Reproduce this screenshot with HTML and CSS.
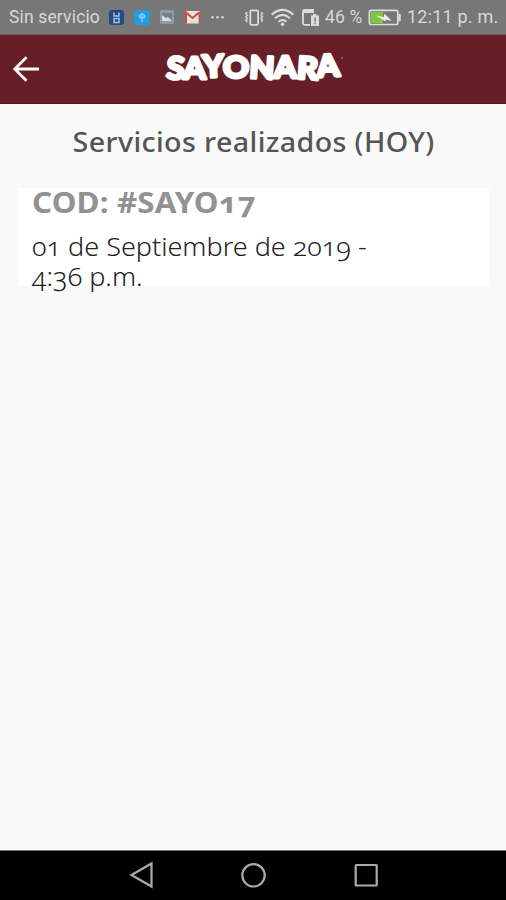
FILE: index.html
```html
<!DOCTYPE html>
<html lang="es">
<head>
  <meta charset="UTF-8" />
  <meta name="viewport" content="width=device-width, initial-scale=1.0">
  <title>Sayonara - Servicios realizados</title>
  <link rel="stylesheet" href="styles.css">
</head>
<body>
  <div class="statusbar">
    <span class="carrier">Sin servicio</span>
    <svg class="notifications" width="118" height="34" viewBox="108 0 118 34">
      <rect x="109" y="10" width="15" height="15" rx="3" fill="#234a87"/>
      <path d="M114 12.500v3.500h5v-3.500M114 22.500v-4h5v4z" fill="none" stroke="#a9bfdf" stroke-width="1.500"/>
      <rect x="134" y="10" width="16" height="15" rx="3" fill="#229cdb"/>
      <path d="M142 13v9M139.500 15.500l2.500-2 2.500 2v2h-5z" fill="none" stroke="#8ed0f0" stroke-width="1.300"/>
      <rect x="160" y="10" width="14" height="14" rx="1.500" fill="#8d9ba4"/>
      <path d="M162 13h10v8h-10z" fill="#71818c"/>
      <path d="M162 21v-6l4 3 2-1 4 4z" fill="#d5dcdf"/>
      <rect x="185" y="11" width="15" height="12.500" rx="1" fill="#e4e1df"/>
      <path d="M186 23.500V12.500l6.500 5.500 6.500-5.500" fill="none" stroke="#d6493f" stroke-width="2"/>
      <path d="M199.300 12v11.500" stroke="#d6493f" stroke-width="1.400"/>
      <g fill="#d4d4d4">
        <circle cx="212.500" cy="17.300" r="1.300"/>
        <circle cx="217.500" cy="17.300" r="1.300"/>
        <circle cx="222.500" cy="17.300" r="1.300"/>
      </g>
    </svg>
    <svg class="signals" width="80" height="34" viewBox="242 0 80 34">
      <rect x="250.300" y="10.300" width="7.800" height="14.500" rx="1.200" fill="none" stroke="#dcdcdc" stroke-width="1.800"/>
      <path d="M247.200 12l-1.200 1.500 1.200 1.700-1.200 1.700 1.200 1.700-1.200 1.700 1.200 1.700M261.200 12l1.200 1.500-1.200 1.700 1.200 1.700-1.200 1.700 1.200 1.700-1.200 1.700" fill="none" stroke="#d0d0d0" stroke-width="1.800"/>
      <g fill="none" stroke="#dcdcdc" stroke-width="2">
        <path d="M271.700 14.700q11-9.600 21.600 0"/>
        <path d="M275 18.300q7.500-6.800 15 0"/>
        <path d="M278.500 21.800q4-3.600 8 0"/>
      </g>
      <circle cx="282.500" cy="24.300" r="1.800" fill="#dcdcdc"/>
      <path d="M310 24.800h-5.500q-1.500 0-1.500-1.500v-11.800q0-1.500 1.500-1.500h8.500v3" fill="none" stroke="#dcdcdc" stroke-width="1.800"/>
      <path d="M303 10h10v3h-10z" fill="#dcdcdc"/>
      <path d="M311 15.500h2v-1.500h3.500v1.500h2.500v10.500h-8z" fill="#dcdcdc"/>
      <path d="M315 17.500v4M315 22.800v1.500" stroke="#777" stroke-width="1.500"/>
    </svg>
    <span class="percent">46 %</span>
    <svg class="battery" width="33" height="34" viewBox="368 0 33 34">
      <rect x="369.400" y="10.300" width="28.400" height="14.200" rx="1.500" fill="#777" stroke="#dedede" stroke-width="1.700"/>
      <rect x="371" y="12" width="12" height="11" fill="#7fc935"/>
      <path d="M399.700 14v7" stroke="#dedede" stroke-width="2"/>
      <path d="M376 15.500l8 1.500v-3.500l4 3.500 3.500 4-6-1.500v2z" fill="#ececec"/>
    </svg>
    <span class="clock">12:11 p. m.</span>
  </div>

  <header class="appbar">
    <svg class="back" width="28" height="28" viewBox="0 0 28 28">
      <path d="M28 14H4M15.500 2.300L3.800 14l11.700 11.700" fill="none" stroke="#fff" stroke-width="2.800"/>
    </svg>
    <svg class="logo" width="184" height="36" viewBox="0 0 184 36">
      <text class="logo-text" x="4" y="27" dy="0.500 0 -0.700 0.200 0 0 0.500 -1" rotate="4 0 -3 0 3 0 4 -4" textLength="174" lengthAdjust="spacingAndGlyphs">SAYONARA</text>
      <circle cx="180" cy="7" r=".8" fill="#c9a5a9"/>
    </svg>
  </header>

  <main class="content">
    <h1><span>Servicios realizados (HOY)</span></h1>
    <div class="card">
      <div class="code">COD: #SAYO17</div>
      <div class="date">01 de Septiembre de 2019 -<br>4:36 p.m.</div>
    </div>
  </main>

  <nav class="navbar">
    <svg width="506" height="49" viewBox="0 851 506 49">
      <g fill="none" stroke="#aaa" stroke-width="2.200">
        <path d="M131.500 875l20-11.500v23z"/>
        <circle cx="253.500" cy="875.300" r="11.200"/>
        <rect x="355.700" y="865" width="21" height="20.500" rx=".5"/>
      </g>
    </svg>
  </nav>
</body>
</html>
```
FILE: styles.css
```css
html, body {
  height: 100%;
  margin: 0;
  overflow: hidden;
}
body {
  display: flex;
  flex-direction: column;
  background: #f9f9f9;
  font-family: "Noto Sans", "Open Sans", sans-serif;
}
.statusbar {
  display: flex;
  align-items: center;
  height: 35px;
  box-sizing: border-box;
  padding-left: 9px;
  background: #777;
  border-bottom: 1px solid #74595c;
  color: #d8d8d8;
  font-family: Roboto, sans-serif;
  font-size: 17.5px;
  line-height: 34px;
  white-space: nowrap;
  flex: none;
}
.statusbar svg {
  flex: none;
}
.carrier {
  width: 99px;
  letter-spacing: 0.15px;
}
.signals {
  margin-left: 16px;
}
.percent {
  width: 43px;
  margin-left: 3px;
  letter-spacing: 0.2px;
}
.clock {
  margin-left: 6px;
  font-size: 18px;
  letter-spacing: 0.2px;
}
.appbar {
  display: flex;
  align-items: center;
  height: 69px;
  box-sizing: border-box;
  padding-left: 11px;
  background: #661f27;
  border-bottom: 1px solid #551820;
  flex: none;
}
.logo {
  margin-left: 123px;
}
.logo-text {
  font-family: Lato, sans-serif;
  font-size: 31px;
  font-weight: 900;
  fill: #fff;
  stroke: #fff;
  stroke-width: 3px;
  stroke-linejoin: round;
}
.content {
  flex: 1;
  padding: 18px 17px 0 18px;
}
h1 {
  margin: 0;
  height: 66px;
  line-height: 40px;
  font-size: 26.5px;
  font-weight: 500;
  text-align: center;
  color: #555;
  white-space: nowrap;
}
h1 span {
  display: inline-block;
  letter-spacing: 0.35px;
  transform: scaleX(1.08);
}
.card {
  height: 98px;
  box-sizing: border-box;
  padding-left: 14px;
  background: #fff;
  font-variant-numeric: oldstyle-nums;
  white-space: nowrap;
}
/* the app font runs a little wider than Noto */
.code, .date {
  transform: scaleX(1.08);
  transform-origin: left;
}
.code {
  height: 43px;
  line-height: 28px;
  font-size: 29px;
  font-weight: 700;
  letter-spacing: 0.15px;
  color: #929292;
}
.date {
  line-height: 30px;
  font-size: 25px;
  font-weight: 300;
  color: #222;
}
.navbar {
  height: 49px;
  background: #000;
  border-top: 1px solid #777;
  flex: none;
}
.navbar svg {
  display: block;
}
```
